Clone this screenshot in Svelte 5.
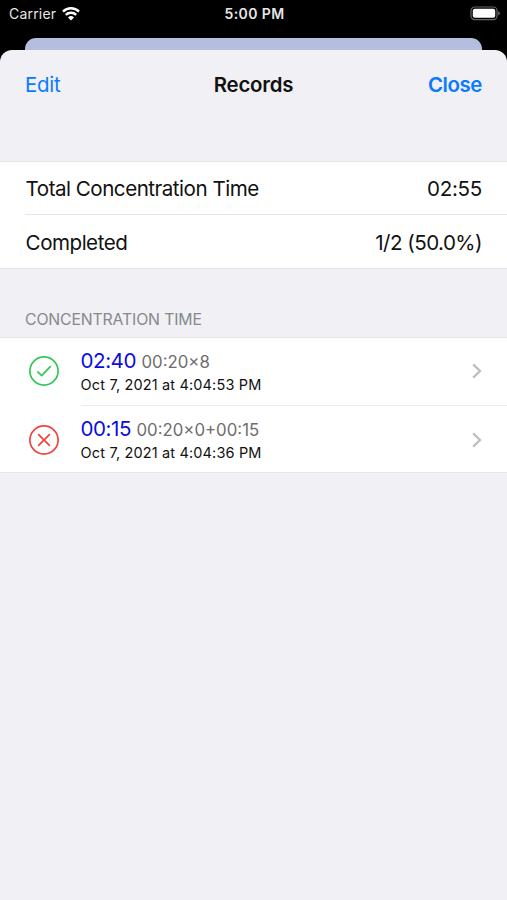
<script>
  let carrier = "Carrier";
  let clock = "5:00 PM";

  const summary = [
    { name: "total", label: "Total Concentration Time", value: "02:55" },
    { name: "completed", label: "Completed", value: "1/2 (50.0%)" },
  ];

  let records = [
    { id: 1, done: true, time: "02:40", detail: "00:20×8", date: "Oct 7, 2021 at 4:04:53 PM" },
    { id: 2, done: false, time: "00:15", detail: "00:20×0+00:15", date: "Oct 7, 2021 at 4:04:36 PM" },
  ];
</script>

<main>
  <header class="status-bar">
    <div class="carrier">
      <span>{carrier}</span>
      <svg class="wifi" width="18" height="14" viewBox="0 0 18 14">
        <path d="M1 4.6 A11.4 11.4 0 0 1 17 4.6" />
        <path d="M3.8 7.9 A7.4 7.4 0 0 1 14.2 7.9" />
        <path class="dot" d="M9 13.4 L6 10.4 A4.3 4.3 0 0 1 12 10.4 Z" />
      </svg>
    </div>
    <span class="clock">{clock}</span>
    <svg class="battery" width="31" height="15" viewBox="0 0 31 15">
      <rect class="shell" x="1" y="1" width="26" height="12.6" rx="3.6" />
      <rect x="2.8" y="2.8" width="22.4" height="9" rx="2" fill="#fff" />
      <path d="M28.2 5.2 Q30 5.8 30 7.3 Q30 8.8 28.2 9.4 Z" fill="#666" />
    </svg>
  </header>

  <div class="back-card"></div>

  <div class="sheet">
    <nav>
      <button class="edit">Edit</button>
      <h1>Records</h1>
      <button class="close">Close</button>
    </nav>

    <!-- Totals -->
    <section class="group">
      {#each summary as row}
        <div class="summary-row">
          <span class="label">{row.label}</span>
          <span class="value {row.name}">{row.value}</span>
        </div>
      {/each}
    </section>

    <h2>CONCENTRATION TIME</h2>

    <!-- Record list -->
    <section class="group">
      {#each records as record (record.id)}
        <div class="record">
          <svg class="state" class:done={record.done} width="32" height="32" viewBox="0 0 32 32">
            <circle cx="16" cy="16" r="14.1" />
            {#if record.done}
              <path d="M9.8 16.8 L13.7 20.6 L22.3 11.7" />
            {:else}
              <path d="M10.6 10.6 L21.4 21.4 M21.4 10.6 L10.6 21.4" />
            {/if}
          </svg>
          <div class="record-body">
            <div class="record-text">
              <div class="line">
                <span class="time">{record.time}</span>
                <span class="detail">{record.detail}</span>
              </div>
              <div class="date">{record.date}</div>
            </div>
            <svg class="chevron" width="10" height="16" viewBox="0 0 10 16">
              <path d="M1.2 1.3 L8 8 L1.2 14.7" />
            </svg>
          </div>
        </div>
      {/each}
    </section>
  </div>
</main>

<style>
  :global(body) {
    margin: 0;
    background: #000;
  }

  main {
    display: flex;
    flex-direction: column;
    height: 900px;
    background: #000;
    color: #111;
    font-family: Inter, "Liberation Sans", sans-serif;
    overflow: hidden;
  }

  .status-bar {
    display: grid;
    grid-template-columns: 1fr auto 1fr;
    align-items: center;
    height: 27px;
    padding: 0 6px 0 9px;
    margin-bottom: 11px;
    color: #e6e6e6;
    font-size: 14px;
  }

  .carrier {
    display: flex;
    align-items: center;
    gap: 6px;
    letter-spacing: 0.2px;
  }

  .wifi {
    fill: none;
    stroke: #fff;
    stroke-width: 2.4;
  }

  .wifi .dot {
    fill: #fff;
    stroke: none;
  }

  .clock {
    font-weight: 600;
    letter-spacing: 0.4px;
    margin-left: -1px;
  }

  .battery {
    justify-self: end;
  }

  .shell {
    fill: none;
    stroke: #666;
    stroke-width: 1.2;
  }

  .back-card {
    flex: none;
    height: 12px;
    margin: 0 25px;
    background: #b4bfdf;
    border-radius: 11px 11px 0 0;
  }

  .sheet {
    flex: 1;
    background: #f0f0f5;
    border-radius: 12px 12px 0 0;
  }

  nav {
    display: grid;
    grid-template-columns: 1fr auto 1fr;
    align-items: center;
    height: 69px;
    padding: 0 25px;
    margin-bottom: 42px;
  }

  h1, nav button {
    margin: 0;
    padding: 0;
    font-family: inherit;
    font-size: 20.4px;
    font-weight: 600;
    line-height: 24px;
    letter-spacing: -0.2px;
  }

  nav button {
    border: none;
    background: none;
    color: #0a7aff;
    cursor: pointer;
  }

  .edit {
    justify-self: start;
    font-weight: 400;
  }

  .close {
    justify-self: end;
    letter-spacing: -0.4px;
  }

  .group {
    background: #fff;
    border-top: 1px solid #e8e8eb;
    border-bottom: 1px solid #e8e8eb;
  }

  .summary-row {
    display: flex;
    justify-content: space-between;
    align-items: center;
    height: 52px;
    margin-left: 25px;
    padding-right: 25px;
    font-size: 20.6px;
  }

  .summary-row + .summary-row {
    height: 52px;
    padding-top: 1px;
    border-top: 1px solid #e6e6e9;
  }

  .label {
    padding-left: 0.6px;
    letter-spacing: -0.5px;
  }

  .value {
    letter-spacing: -0.3px;
  }

  .value.completed {
    letter-spacing: -0.55px;
  }

  h2 {
    margin: 0;
    padding: 41px 25px 8px;
    color: #88888d;
    font-size: 15.8px;
    font-weight: 400;
    letter-spacing: -0.15px;
    line-height: 19px;
  }

  .record {
    display: flex;
    align-items: center;
    height: 67px;
    padding-left: 28px;
  }

  .state {
    flex: none;
    margin: 0 20.6px 1px 0;
    fill: none;
    stroke: #f0453e;
    stroke-width: 1.7;
    stroke-linecap: round;
    stroke-linejoin: round;
  }

  .state.done {
    stroke: #35c65a;
  }

  .record-body {
    display: flex;
    flex: 1;
    box-sizing: border-box;
    align-items: center;
    justify-content: space-between;
    height: 100%;
    padding: 0 25px 1px 0;
  }

  .record + .record .state {
    margin-top: 2px;
    margin-bottom: 0;
  }

  .record + .record .record-body {
    padding: 1px 25px 0 0;
    border-top: 1px solid #ebebee;
  }

  .line {
    display: flex;
    align-items: baseline;
    gap: 5.6px;
    line-height: 26px;
  }

  .time {
    color: #0c0ce0;
    font-size: 20.6px;
    letter-spacing: -0.5px;
  }

  .detail {
    color: #6d6d6d;
    font-size: 16.8px;
  }

  .date {
    font-size: 14.5px;
    letter-spacing: 0.15px;
    line-height: 20px;
  }

  .chevron {
    fill: none;
    stroke: #c0c0c3;
    stroke-width: 2.4;
  }
</style>
